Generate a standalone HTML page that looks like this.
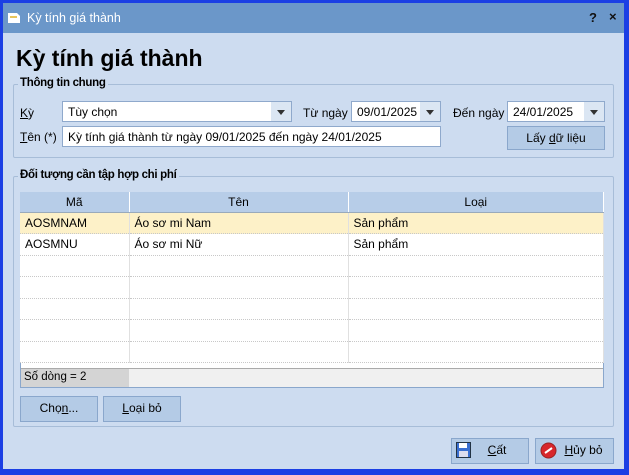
<!DOCTYPE html>
<html><head><meta charset="utf-8"><style>
*{box-sizing:border-box;margin:0;padding:0}
body{width:629px;height:475px;background:#1b3fe4;font-family:"Liberation Sans",sans-serif;font-size:12px;color:#000;position:relative;overflow:hidden}
.a{position:absolute}
#win{left:3px;top:3px;width:621px;height:466px;background:#cddcf0}
#tb{left:3px;top:3px;width:621px;height:30px;background:#6b97c9;color:#fff}
.grp{border:1px solid #a7bdd8;border-radius:2px}
.leg{background:#cddcf0;font-weight:bold;font-size:11.5px;padding:0 2px;letter-spacing:-0.3px}
.inp{background:#fff;border:1px solid #8fa9cc;height:21px;padding:3px 5px;font-size:12px}
.dd{position:absolute;right:0;top:0;width:20px;height:19px;background:#dbe6f3}
.dd:after{content:"";position:absolute;left:6px;top:8px;border:4px solid transparent;border-top:5px solid #333}
.btn{background:#b4cbe6;border:1px solid #8aa7cc;text-align:center;font-size:12px;line-height:23px}
table{border-collapse:collapse;position:absolute;left:20px;top:192px;width:584px}
td{height:21.5px;border-right:1px solid #e0e0e0;border-bottom:1px dotted #c8c8c8;padding-left:5px;background:#fff}
th{height:20px;font-weight:normal;background:#b7cde8;border-right:1px solid #fff;border-bottom:1px solid #9ab}
u{text-decoration:underline}
</style></head><body>
<div id="win" class="a"></div>
<div id="tb" class="a">
<svg class="a" style="left:4px;top:8px" width="14" height="13"><path d="M1 2h9l3 3v7H1z" fill="#fff"/><path d="M3 5h7v2H3z" fill="#e8c55b"/></svg>
<span class="a" style="left:24px;top:8px;font-size:12.5px">Kỳ tính giá thành</span>
<span class="a" style="left:586px;top:7px;font-weight:bold;font-size:13px;color:#111">?</span>
<span class="a" style="left:606px;top:6px;font-weight:bold;font-size:13px;color:#111">×</span>
</div>
<div class="a" style="left:16px;top:45px;font-size:23px;font-weight:bold">Kỳ tính giá thành</div>

<div class="a grp" style="left:13px;top:84px;width:601px;height:74px"></div>
<div class="a leg" style="left:18px;top:77px">Thông tin chung</div>
<div class="a" style="left:20px;top:106px"><u>K</u>ỳ</div>
<div class="a inp" style="left:62px;top:101px;width:230px">Tùy chọn<div class="dd"></div></div>
<div class="a" style="left:303px;top:106px">Từ ngày</div>
<div class="a inp" style="left:351px;top:101px;width:90px">09/01/2025<div class="dd"></div></div>
<div class="a" style="left:453px;top:106px">Đến ngày</div>
<div class="a inp" style="left:507px;top:101px;width:98px">24/01/2025<div class="dd"></div></div>
<div class="a" style="left:20px;top:130px"><u>T</u>ên (*)</div>
<div class="a inp" style="left:62px;top:126px;width:379px">Kỳ tính giá thành từ ngày 09/01/2025 đến ngày 24/01/2025</div>
<div class="a btn" style="left:507px;top:126px;width:98px;height:24px">Lấy <u>d</u>ữ liệu</div>

<div class="a grp" style="left:13px;top:176px;width:601px;height:251px"></div>
<div class="a leg" style="left:18px;top:169px">Đối tượng cần tập hợp chi phí</div>
<div class="a" style="left:20px;top:192px;width:584px;height:196px;background:#fff;border:1px solid #8aa7cc"></div>
<table>
<tr><th style="width:109px">Mã</th><th style="width:219px">Tên</th><th>Loại</th></tr>
<tr><td style="background:#fdf1c8">AOSMNAM</td><td style="background:#fdf1c8">Áo sơ mi Nam</td><td style="background:#fdf1c8">Sản phẩm</td></tr>
<tr><td>AOSMNU</td><td>Áo sơ mi Nữ</td><td>Sản phẩm</td></tr>
<tr><td></td><td></td><td></td></tr><tr><td></td><td></td><td></td></tr><tr><td></td><td></td><td></td></tr><tr><td></td><td></td><td></td></tr><tr><td></td><td></td><td></td></tr>
</table>
<div class="a" style="left:21px;top:368px;width:582px;height:19px;background:#f0f0f0;border-top:1px solid #aaa"></div>
<div class="a" style="left:21px;top:369px;width:108px;height:18px;background:#d4d4d4;padding:2px 3px;font-size:11.5px">Số dòng = 2</div>
<div class="a btn" style="left:20px;top:396px;width:78px;height:26px">Chọ<u>n</u>...</div>
<div class="a btn" style="left:103px;top:396px;width:78px;height:26px"><u>L</u>oại bỏ</div>

<div class="a btn" style="left:451px;top:438px;width:78px;height:26px;padding-left:14px"><u>C</u>ất</div>
<svg class="a" style="left:456px;top:442px" width="15" height="16"><rect x="0.5" y="0.5" width="14" height="15" fill="#3a6fd0" stroke="#234"/><rect x="3" y="1" width="8" height="5" fill="#fff"/><rect x="3" y="9" width="9" height="6" fill="#dde"/></svg>
<div class="a btn" style="left:535px;top:438px;width:79px;height:26px;padding-left:18px"><u>H</u>ủy bỏ</div>
<svg class="a" style="left:540px;top:442px" width="17" height="17"><circle cx="8.5" cy="8.5" r="7.5" fill="#d8262b" stroke="#922"/><path d="M5 11L12 6" stroke="#fff" stroke-width="2"/></svg>
</body></html>
